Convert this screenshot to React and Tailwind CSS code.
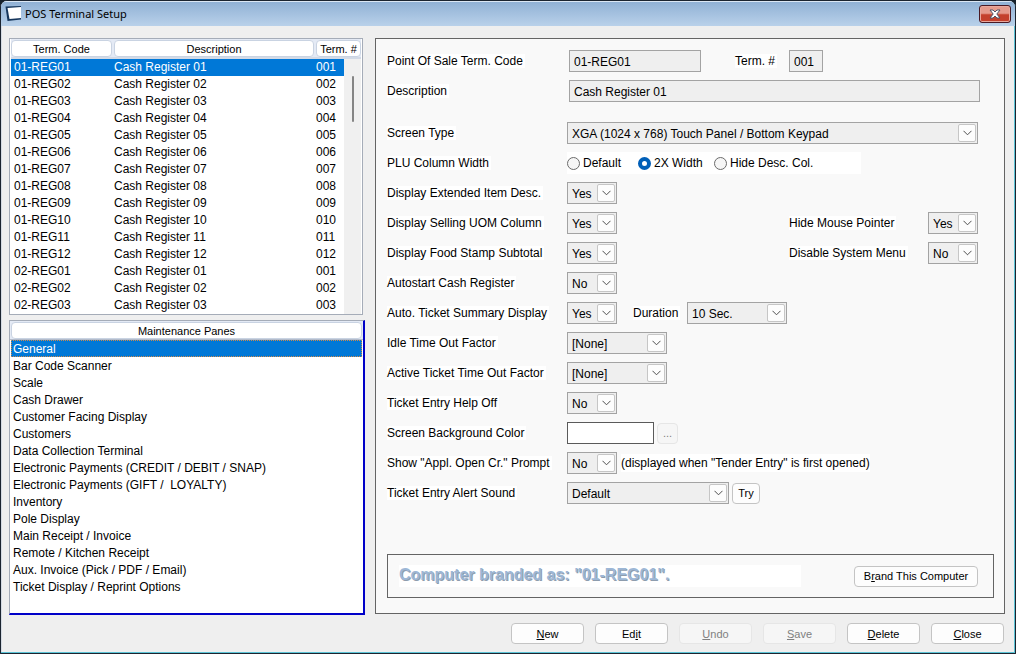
import React, { useState } from "react";
import clsx from "clsx";

const REGISTERS = [
  ...Array.from({ length: 12 }, (_, i) => ["01", i + 1]),
  ...Array.from({ length: 3 }, (_, i) => ["02", i + 1]),
].map(([site, n]) => {
  const nn = String(n).padStart(2, "0");
  return { code: `${site}-REG${nn}`, desc: `Cash Register ${nn}`, num: `0${nn}` };
});

const PANES = [
  "General",
  "Bar Code Scanner",
  "Scale",
  "Cash Drawer",
  "Customer Facing Display",
  "Customers",
  "Data Collection Terminal",
  "Electronic Payments (CREDIT / DEBIT / SNAP)",
  "Electronic Payments (GIFT /  LOYALTY)",
  "Inventory",
  "Pole Display",
  "Main Receipt / Invoice",
  "Remote / Kitchen Receipt",
  "Aux. Invoice (Pick / PDF / Email)",
  "Ticket Display / Reprint Options",
];

function HeaderCap({ children }) {
  return (
    <div className="h-[17px] rounded-[4px] border border-[#c9d3e2] bg-white text-center text-[11px] leading-[17px] whitespace-nowrap">
      {children}
    </div>
  );
}

function Label({ htmlFor, children }) {
  return (
    <label htmlFor={htmlFor} className="bg-white pr-[2px] leading-[18px] whitespace-nowrap">
      {children}
    </label>
  );
}

function Select({ id, className, options, label }) {
  return (
    <div className={clsx("relative h-[22px] shrink-0", className)}>
      <select
        id={id}
        aria-label={label}
        className="block h-full w-full appearance-none border border-[#a3a3a3] bg-[#efefef] pl-1 pt-px outline-none"
      >
        {options.map((o) => (
          <option key={o}>{o}</option>
        ))}
      </select>
      <span className="pointer-events-none absolute top-[2px] right-[2px] flex size-[18px] items-center justify-center rounded-[2px] border border-[#c6c6c6] bg-[#fdfdfd]">
        <svg width="9" height="6" viewBox="0 0 9 6" fill="none" stroke="#505050" strokeWidth="1">
          <path d="M0.5 0.8 4.5 4.8 8.5 0.8" />
        </svg>
      </span>
    </div>
  );
}

function Row({ id, label, children }) {
  return (
    <div className="flex h-[22px] items-center">
      <div className="w-[180px] shrink-0">
        <Label htmlFor={id}>{label}</Label>
      </div>
      {children}
    </div>
  );
}

function Field({ id, className, value }) {
  return (
    <input
      id={id}
      readOnly
      defaultValue={value}
      className={clsx("h-[22px] min-w-0 border border-[#a3a3a3] bg-[#efefef] pl-1 pt-px outline-none", className)}
    />
  );
}

function Button({ pre = "", hot = "", rest, className, disabled }) {
  return (
    <button
      type="button"
      disabled={disabled}
      className={clsx(
        "h-[21px] shrink-0 rounded-[4px] border text-[11px] leading-[18px]",
        disabled ? "border-[#e6e6e6] bg-[#f6f6f6] text-[#808080]" : "border-[#c4c4c4] bg-[#fdfdfd] text-black",
        className
      )}
    >
      {pre}
      {hot && <span className="underline underline-offset-1">{hot}</span>}
      {rest}
    </button>
  );
}

function RadioOption({ label, checked, onChange, className }) {
  return (
    <label className={clsx("flex items-center gap-[3px] whitespace-nowrap", className)}>
      <input
        type="radio"
        name="plu-width"
        checked={checked}
        onChange={onChange}
        className="size-[13px] appearance-none rounded-full border border-[#6b6b6b] bg-[#f6f6f6] checked:border-4 checked:border-[#005fb8] checked:bg-white"
      />
      {label}
    </label>
  );
}

const YES = ["Yes", "No"];
const NO = ["No", "Yes"];

export default function App() {
  const [term, setTerm] = useState(0);
  const [pane, setPane] = useState(0);
  const [width, setWidth] = useState("2X Width");

  return (
    <div className="min-h-screen bg-[#16202a] font-['Liberation_Sans',Arial,sans-serif] text-[12px] text-black">
      <div className="flex min-h-screen flex-col overflow-hidden rounded-t-[7px] border border-[#1b2430] bg-[#efefef] shadow-[inset_-1px_-1px_0_#5cc4d6,inset_1px_0_0_#d5dbe3]">
        <header className="flex h-[25px] items-center bg-linear-to-b from-[#8fb0d4] to-[#b9d1ea] pr-1 pl-1 shadow-[inset_0_1px_0_#dbe7f4]">
          <svg width="17" height="17" viewBox="0 0 17 17">
            <path d="M0.5 1.5 16 1 V3 L16 14.5 2.5 16Z" fill="#16365c" />
            <path d="M2.5 3 16 2 V13 L4.5 14Z" fill="#fff" />
          </svg>
          <h1 className="ml-[3px] flex-1 pt-[2px] font-['Noto_Sans',sans-serif] text-[11px]">POS Terminal Setup</h1>
          <button
            type="button"
            aria-label="Close window"
            className="flex h-[18px] w-8 items-center justify-center rounded-[3px] border border-[#4a1a24] bg-linear-to-b from-[#e59a8c] from-45% to-[#c4402c] to-55% shadow-[inset_0_0_0_1px_#e8a79c]"
          >
            <svg width="12" height="10" viewBox="0 0 12 10">
              <path
                d="M1 1H4L6 3 8 1H11L7.8 5 11 9H8L6 7 4 9H1L4.2 5Z"
                fill="#fff"
                stroke="#4f5468"
                strokeWidth="1"
              />
            </svg>
          </button>
        </header>

        <main className="flex flex-1 gap-[10px] pt-3 pr-[10px] pl-2">
          <div className="flex w-[356px] shrink-0 flex-col gap-[5px]">
            <div className="mr-[2px] border border-[#a5acb8] bg-white px-px">
              <table className="w-full table-fixed border-collapse">
                <colgroup>
                  <col className="w-[102px]" />
                  <col className="w-[202px]" />
                  <col />
                  <col className="w-[17px]" />
                </colgroup>
                <thead className="border-b-2 border-[#d3dae6] bg-[#e4eaf5]">
                  <tr>
                    <th className="p-0 pt-px pr-px font-normal">
                      <HeaderCap>Term. Code</HeaderCap>
                    </th>
                    <th className="p-0 pt-px pr-px pl-px font-normal">
                      <HeaderCap>Description</HeaderCap>
                    </th>
                    <th colSpan={2} className="p-0 pt-px pl-px font-normal">
                      <HeaderCap>Term. #</HeaderCap>
                    </th>
                  </tr>
                </thead>
                <tbody>
                  {REGISTERS.map((r, i) => (
                    <tr
                      key={r.code}
                      onClick={() => setTerm(i)}
                      className={clsx("h-[17px] leading-[17px]", i === term && "bg-[#0078d7] text-white")}
                    >
                      <td className="p-0 pl-[3px]">{r.code}</td>
                      <td className="p-0 pl-px">{r.desc}</td>
                      <td className="p-0 pl-px">{r.num}</td>
                      {i === 0 && (
                        <td rowSpan={REGISTERS.length} className="bg-[#f0f0f0] p-0 pt-[17px] align-top">
                          <div className="mx-auto h-[46px] w-[2px] rounded-full bg-[#858585]" />
                        </td>
                      )}
                    </tr>
                  ))}
                </tbody>
              </table>
            </div>

            <section className="flex-1 border border-r-2 border-b-2 border-[#a5acb8] border-r-[#0000c8] border-b-[#0000c8] bg-white">
              <h2 className="border-b border-[#b4bccb] bg-[#e4eaf5] px-px pt-px">
                <HeaderCap>Maintenance Panes</HeaderCap>
              </h2>
              <ul className="px-px">
                {PANES.map((p, i) => (
                  <li key={p}>
                    <button
                      type="button"
                      onClick={() => setPane(i)}
                      className={clsx(
                        "block h-[17px] w-full border border-dotted pl-px text-left leading-[16px] whitespace-pre",
                        i === pane ? "border-[#d08a4a] bg-[#0078d7] text-white" : "border-transparent"
                      )}
                    >
                      {p}
                    </button>
                  </li>
                ))}
              </ul>
            </section>
          </div>

          <form
            className="mb-px flex min-w-0 flex-1 flex-col border border-[#646464] bg-[#f9f9f9] pt-[11px] pr-[10px] pb-[15px] pl-[11px]"
            onSubmit={(e) => e.preventDefault()}
          >
            <div className="flex flex-col gap-2 pr-4">
              <Row id="code" label="Point Of Sale Term. Code">
                <Field id="code" className="ml-[2px] w-[132px]" value="01-REG01" />
                <div className="ml-[34px] w-[54px]">
                  <Label htmlFor="num">Term. #</Label>
                </div>
                <Field id="num" className="w-[34px]" value="001" />
              </Row>
              <Row id="desc" label="Description">
                <Field id="desc" className="-mr-[2px] ml-[2px] flex-1" value="Cash Register 01" />
              </Row>
              <div className="h-1" />
              <Row id="screen" label="Screen Type">
                <Select id="screen" className="flex-1" options={["XGA (1024 x 768) Touch Panel / Bottom Keypad"]} />
              </Row>
              <Row label="PLU Column Width">
                <div role="radiogroup" aria-label="PLU Column Width" className="flex h-[22px] w-[294px] items-center bg-white">
                  {["Default", "2X Width", "Hide Desc. Col."].map((o, i) => (
                    <RadioOption
                      key={o}
                      label={o}
                      checked={width === o}
                      onChange={() => setWidth(o)}
                      className={i === 0 ? "w-[71px]" : i === 1 ? "w-[76px]" : ""}
                    />
                  ))}
                </div>
              </Row>
              <Row id="ext" label="Display Extended Item Desc.">
                <Select id="ext" className="w-[50px]" options={YES} />
              </Row>
              <Row id="uom" label="Display Selling UOM Column">
                <Select id="uom" className="w-[50px]" options={YES} />
                <div className="ml-auto w-[139px]">
                  <Label htmlFor="mouse">Hide Mouse Pointer</Label>
                </div>
                <Select id="mouse" className="w-[50px]" options={YES} />
              </Row>
              <Row id="stamp" label="Display Food Stamp Subtotal">
                <Select id="stamp" className="w-[50px]" options={YES} />
                <div className="ml-auto w-[139px]">
                  <Label htmlFor="menu">Disable System Menu</Label>
                </div>
                <Select id="menu" className="w-[50px]" options={NO} />
              </Row>
              <Row id="auto" label="Autostart Cash Register">
                <Select id="auto" className="w-[50px]" options={NO} />
              </Row>
              <Row id="summary" label="Auto. Ticket Summary Display">
                <Select id="summary" className="w-[50px]" options={YES} />
                <div className="ml-4 w-[54px]">
                  <Label htmlFor="duration">Duration</Label>
                </div>
                <Select id="duration" className="w-[100px]" options={["10 Sec."]} />
              </Row>
              <Row id="idle" label="Idle Time Out Factor">
                <Select id="idle" className="w-[100px]" options={["[None]"]} />
              </Row>
              <Row id="active" label="Active Ticket Time Out Factor">
                <Select id="active" className="w-[100px]" options={["[None]"]} />
              </Row>
              <Row id="help" label="Ticket Entry Help Off">
                <Select id="help" className="w-[50px]" options={NO} />
              </Row>
              <Row id="color" label="Screen Background Color">
                <input id="color" readOnly className="h-[22px] w-[87px] border border-[#5a5a5a] bg-white outline-none" />
                <Button rest="..." disabled className="ml-[3px] w-[21px]" />
              </Row>
              <Row id="prompt" label={'Show "Appl. Open Cr." Prompt'}>
                <Select id="prompt" className="w-[50px]" options={NO} />
                <p className="ml-1 bg-white whitespace-nowrap">(displayed when "Tender Entry" is first opened)</p>
              </Row>
              <Row id="sound" label="Ticket Entry Alert Sound">
                <Select id="sound" className="w-[162px]" options={["Default"]} />
                <Button rest="Try" className="ml-[3px] w-7" />
              </Row>
            </div>

            <div className="mt-auto flex h-11 items-center border border-[#646464] pr-[15px] pl-[11px]">
              <p className="h-[22px] w-[402px] bg-white text-[16px] leading-[20px] font-bold text-[#9db7d6] [text-shadow:1px_1px_0_#8d9cad]">
                Computer branded as: "01-REG01".
              </p>
              <Button pre="B" hot="r" rest="and This Computer" className="ml-auto w-[124px]" />
            </div>
          </form>
        </main>

        <footer className="flex justify-end gap-[11px] pt-2 pr-[11px] pb-[9px]">
          <Button hot="N" rest="ew" className="w-[73px]" />
          <Button pre="Ed" hot="i" rest="t" className="w-[73px]" />
          <Button hot="U" rest="ndo" className="w-[73px]" disabled />
          <Button hot="S" rest="ave" className="w-[73px]" disabled />
          <Button hot="D" rest="elete" className="w-[73px]" />
          <Button hot="C" rest="lose" className="w-[73px]" />
        </footer>
      </div>
    </div>
  );
}
